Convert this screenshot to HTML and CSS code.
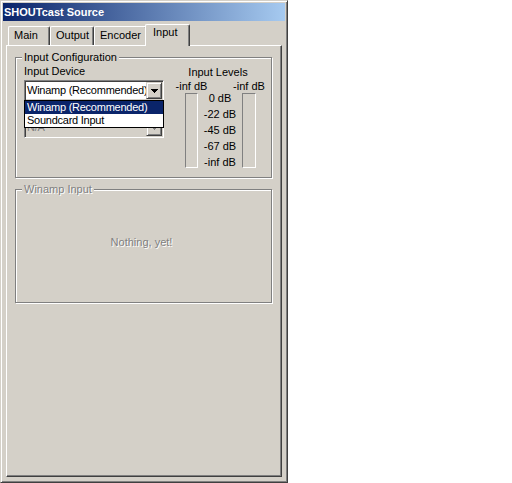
FILE: index.html
```html
<!DOCTYPE html>
<html lang="en">
<head>
  <meta charset="UTF-8">
  <title>SHOUTcast Source</title>
  <link rel="stylesheet" href="styles.css">
</head>
<body>

  <div class="window">
    <!-- Title bar -->
    <div class="titlebar">SHOUTcast Source</div>

    <!-- Tabs -->
    <div class="tabs">
      <div class="tab tab-main">Main</div>
      <div class="tab tab-output">Output</div>
      <div class="tab tab-encoder">Encoder</div>
      <div class="tab tab-input active">Input</div>
    </div>

    <!-- Tab page -->
    <div class="panel">
      <fieldset class="group group-config">
        <legend>Input Configuration</legend>
        <div class="config-row">
          <div class="device-col">
            <div class="label">Input Device</div>
            <div class="combo">
              <span class="combo-text">Winamp (Recommended)</span>
              <span class="combo-btn">
                <svg width="7" height="4" viewBox="0 0 7 4"><path d="M0 0h7v1H0zM1 1h5v1H1zM2 2h3v1H2zM3 3h1v1H3z"/></svg>
              </span>
            </div>
            <div class="combo disabled">
              <span class="combo-text">N/A</span>
              <span class="combo-btn">
                <svg width="7" height="4" viewBox="0 0 7 4"><path d="M0 0h7v1H0zM1 1h5v1H1zM2 2h3v1H2zM3 3h1v1H3z"/></svg>
              </span>
            </div>
            <!-- open dropdown list -->
            <ul class="dropdown">
              <li class="selected">Winamp (Recommended)</li>
              <li>Soundcard Input</li>
            </ul>
          </div>

          <div class="levels">
            <div class="levels-title">Input Levels</div>
            <div class="peak peak-left"><span>-inf dB</span></div>
            <div class="scale">
              <div>0 dB</div>
              <div>-22 dB</div>
              <div>-45 dB</div>
              <div>-67 dB</div>
              <div>-inf dB</div>
            </div>
            <div class="peak peak-right"><span>-inf dB</span></div>
            <div class="meter meter-left"></div>
            <div class="meter meter-right"></div>
          </div>
        </div>
      </fieldset>

      <fieldset class="group group-winamp">
        <legend class="disabled-text">Winamp Input</legend>
        <div class="empty-note disabled-text">Nothing, yet!</div>
      </fieldset>
    </div>
  </div>

</body>
</html>
```

FILE: styles.css
```css
* {
  box-sizing: border-box;
}

body {
  margin: 0;
  background-color: #fff;
  font-family: 'Liberation Sans', Arial, sans-serif;
  font-size: 11px;
  color: #000;
}

/* Window frame */
.window {
  width: 288px;
  height: 483px;
  display: flex;
  flex-direction: column;
  padding: 2px;
  background-color: #d4d0c8;
  border: 1px solid;
  border-color: #d4d0c8 #404040 #404040 #d4d0c8;
  box-shadow: inset 1px 1px 0 #fff, inset -1px -1px 0 #808080;
}

.titlebar {
  height: 18px;
  line-height: 18px;
  padding-left: 1px;
  color: #fff;
  font-weight: bold;
  background: linear-gradient(to right, #0a246a, #a6caf0);
}

/* Tabs */
.tabs {
  display: flex;
  align-items: flex-end;
  height: 22px;
  margin: 3px 3px -1px 3px;
  padding-left: 2px;
  position: relative;
  z-index: 1;
}

.tab {
  height: 19px;
  margin-bottom: 1px;
  padding: 2px 0 0 5px;
  line-height: 13px;
  background-color: #d4d0c8;
  border: 1px solid;
  border-bottom: none;
  border-color: #fff #404040 #fff #fff;
  border-radius: 2px 2px 0 0;
  box-shadow: inset -1px 0 0 #808080;
}

.tab-main { width: 42px; }
.tab-output { width: 44px; }
.tab-encoder { width: 53px; }

.tab.active {
  width: 45px;
  height: 22px;
  margin: 0 -2px 0 -2px;
  padding: 1px 0 0 7px;
  position: relative;
}

/* Tab page */
.panel {
  flex: 1;
  margin: 0 3px 3px 3px;
  padding: 5px 9px 0 8px;
  border: 1px solid;
  border-color: #fff #404040 #404040 #fff;
  box-shadow: inset -1px -1px 0 #808080;
}

/* Group boxes */
.group {
  margin: 0;
  padding: 0;
  min-width: 0;
  border: 1px solid #808080;
  box-shadow: inset 1px 1px 0 #fff, 1px 1px 0 #fff;
}

.group legend {
  margin-left: 6px;
  padding: 0 2px;
  line-height: 13px;
  background-color: #d4d0c8;
}

.group-config {
  height: 127px;
}

.group-winamp {
  height: 120px;
  margin-top: 5px;
}

.disabled-text {
  color: #808080;
  text-shadow: 1px 1px 0 #fff;
}

.config-row {
  display: flex;
  padding: 1px 0 0 8px;
}

/* Input device */
.device-col {
  width: 140px;
  position: relative;
}

.label {
  line-height: 13px;
}

.combo {
  display: flex;
  height: 21px;
  margin-top: 2px;
  padding: 1px;
  background-color: #fff;
  border: 1px solid;
  border-color: #808080 #fff #fff #808080;
  box-shadow: inset 1px 1px 0 #404040, inset -1px -1px 0 #d4d0c8;
}

.combo.disabled {
  margin-top: 16px;
  background-color: #d4d0c8;
  color: #808080;
}

.combo.disabled svg {
  fill: #808080;
}

.combo-text {
  flex: 1;
  padding-left: 1px;
  line-height: 17px;
  letter-spacing: -0.25px;
  white-space: nowrap;
  overflow: hidden;
}

.combo-btn {
  width: 16px;
  height: 17px;
  display: flex;
  align-items: center;
  justify-content: center;
  background-color: #d4d0c8;
  border: 1px solid;
  border-color: #d4d0c8 #404040 #404040 #d4d0c8;
  box-shadow: inset 1px 1px 0 #fff, inset -1px -1px 0 #808080;
}

.combo-btn svg {
  display: block;
}

.dropdown {
  position: absolute;
  top: 35px;
  left: 0;
  width: 140px;
  margin: 0;
  padding: 0;
  list-style: none;
  background-color: #fff;
  border: 1px solid #000;
}

.dropdown li {
  line-height: 13px;
  padding-left: 2px;
  letter-spacing: -0.25px;
  white-space: nowrap;
}

.dropdown li.selected {
  background-color: #0a246a;
  color: #fff;
}

/* Input levels */
.levels {
  display: grid;
  grid-template-columns: 13px 44px 14px;
  grid-template-rows: 14px 13px 75px;
  margin-left: 21px;
  padding-top: 1px;
}

.levels-title {
  grid-column: 1 / 4;
  line-height: 13px;
  text-align: center;
  padding-right: 5px;
  white-space: nowrap;
}

.peak {
  display: flex;
  justify-content: center;
  line-height: 13px;
  white-space: nowrap;
}

.peak-left { grid-column: 1; grid-row: 2; }
.peak-right { grid-column: 3; grid-row: 2; }

.scale {
  grid-column: 2;
  grid-row: 2 / 4;
  padding-top: 10px;
  line-height: 16px;
  text-align: center;
  white-space: nowrap;
}

.meter {
  grid-row: 3;
  border: 1px solid;
  border-color: #808080 #fff #fff #808080;
}

.meter-left { grid-column: 1; }
.meter-right { grid-column: 3; }

/* Winamp input */
.empty-note {
  padding: 40px 4px 0 0;
  line-height: 13px;
  text-align: center;
}
```
